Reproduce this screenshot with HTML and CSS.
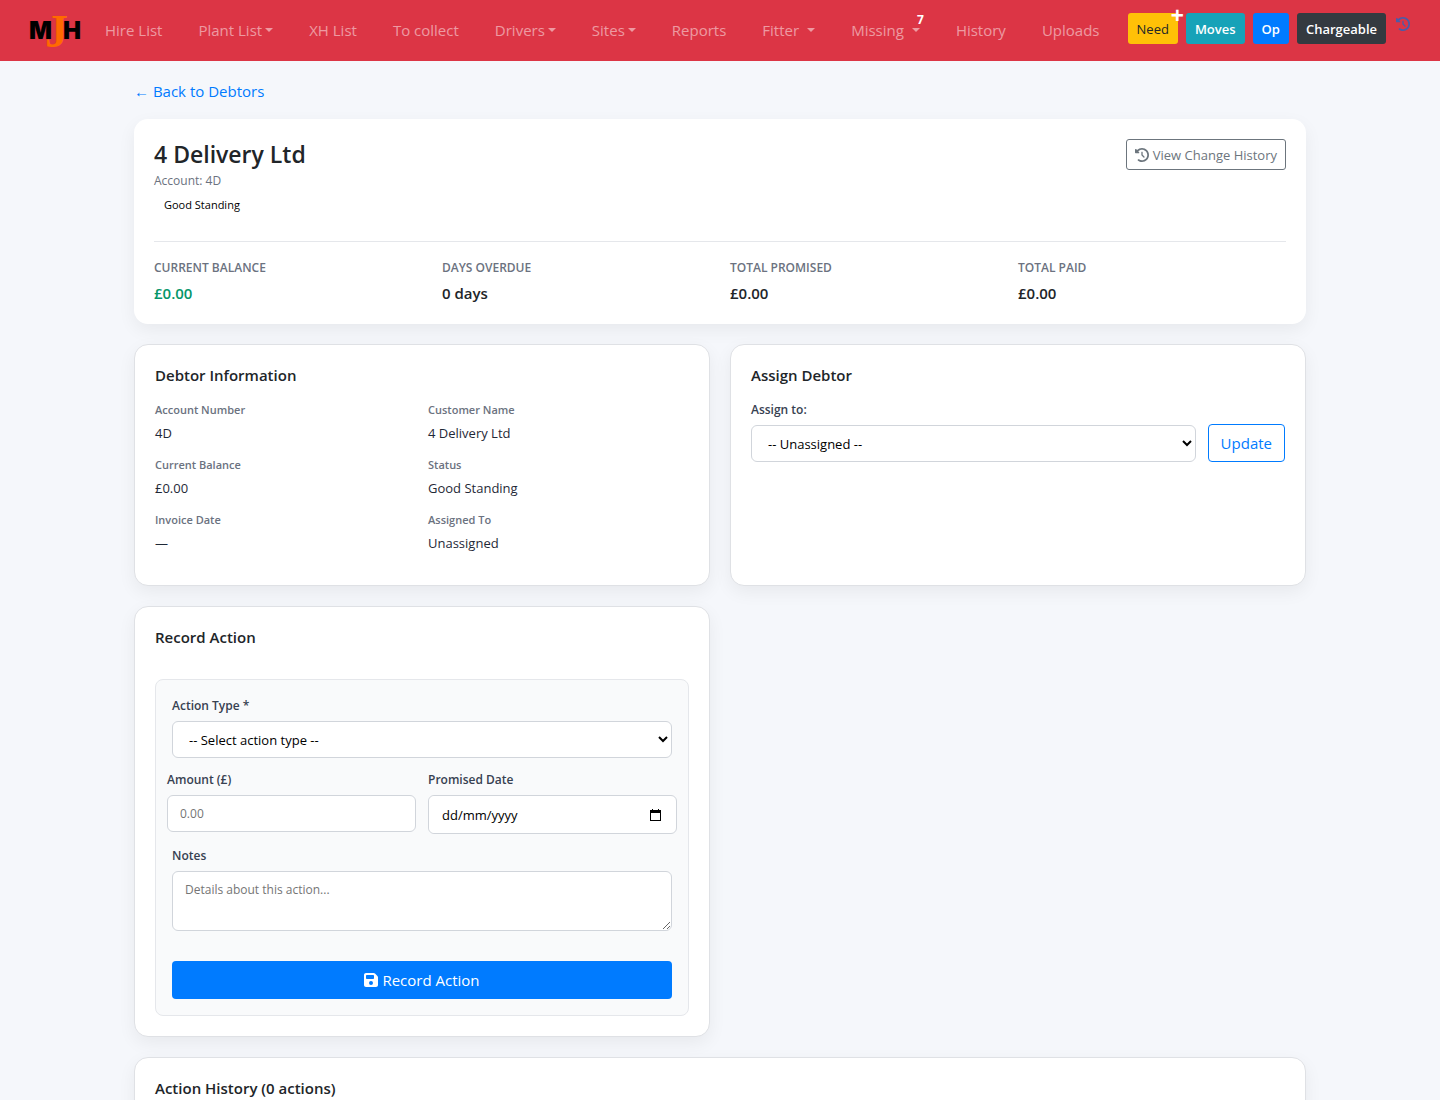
FILE: index.html
```
<!DOCTYPE html>
<html lang="en-GB">
<head>
  <meta charset="utf-8">
  <meta name="viewport" content="width=device-width, initial-scale=1">
  <title>4 Delivery Ltd</title>
  <link rel="stylesheet" href="styles.css">
</head>
<body>
  <nav class="navbar">
    <a href="#" class="brand" aria-label="MJH">
      <svg width="52" height="60" viewBox="0 0 52 60">
        <text x="-1" y="38" class="logo-dark">M</text>
        <text x="33" y="38" class="logo-dark">H</text>
        <text x="15" y="46" class="logo-j">J</text>
      </svg>
    </a>
    <ul class="nav-list">
      <li><a href="#">Hire List</a></li>
      <li><a href="#" class="dropdown">Plant List</a></li>
      <li><a href="#">XH List</a></li>
      <li><a href="#">To collect</a></li>
      <li><a href="#" class="dropdown">Drivers</a></li>
      <li><a href="#" class="dropdown">Sites</a></li>
      <li><a href="#">Reports</a></li>
      <li><a href="#" class="dropdown spaced">Fitter</a></li>
      <li><a href="#" class="dropdown spaced">Missing<span class="count">7</span></a></li>
      <li><a href="#">History</a></li>
      <li><a href="#">Uploads</a></li>
    </ul>
    <div class="nav-buttons">
      <button type="button" class="btn btn-sm btn-warning">Need<span class="plus">+</span></button>
      <button type="button" class="btn btn-sm btn-info">Moves</button>
      <button type="button" class="btn btn-sm btn-primary">Op</button>
      <button type="button" class="btn btn-sm btn-dark">Chargeable</button>
    </div>
    <a href="#" class="nav-history" aria-label="Change history">
      <svg width="14" height="14" viewBox="0 0 512 512" fill="currentColor"><path d="M75 75L41 41C25.900 25.900 0 36.600 0 57.900V168c0 13.300 10.700 24 24 24H134.100c21.400 0 32.100-25.900 17-41l-30.800-30.800C155 85.500 203 64 256 64c106 0 192 86 192 192s-86 192-192 192c-40.800 0-78.600-12.700-109.700-34.400c-14.500-10.100-34.400-6.600-44.600 7.900s-6.600 34.400 7.900 44.600C151.200 495 201.700 512 256 512c141.400 0 256-114.600 256-256S397.400 0 256 0C185.300 0 121.300 28.700 75 75zm181 53c-13.300 0-24 10.700-24 24V256c0 6.400 2.500 12.500 7 17l72 72c9.400 9.400 24.600 9.400 33.900 0s9.400-24.600 0-33.900l-65-65V152c0-13.300-10.700-24-24-24z"/></svg>
    </a>
  </nav>

  <main class="container">
    <a href="#" class="back-link">← Back to Debtors</a>

    <section class="summary">
      <div class="summary-top">
        <div>
          <h1>4 Delivery Ltd</h1>
          <p class="account">Account: 4D</p>
          <span class="badge">Good Standing</span>
        </div>
        <a href="#" class="btn btn-sm btn-outline-secondary">
          <svg width="14" height="14" viewBox="0 0 512 512" fill="currentColor"><path d="M75 75L41 41C25.900 25.900 0 36.600 0 57.900V168c0 13.300 10.700 24 24 24H134.100c21.400 0 32.100-25.900 17-41l-30.800-30.800C155 85.500 203 64 256 64c106 0 192 86 192 192s-86 192-192 192c-40.800 0-78.600-12.700-109.700-34.400c-14.500-10.100-34.400-6.600-44.600 7.900s-6.600 34.400 7.900 44.600C151.200 495 201.700 512 256 512c141.400 0 256-114.600 256-256S397.400 0 256 0C185.300 0 121.300 28.700 75 75zm181 53c-13.300 0-24 10.700-24 24V256c0 6.400 2.500 12.500 7 17l72 72c9.400 9.400 24.600 9.400 33.900 0s9.400-24.600 0-33.900l-65-65V152c0-13.300-10.700-24-24-24z"/></svg>
          View Change History
        </a>
      </div>
      <div class="stats">
        <div>
          <div class="stat-label">Current Balance</div>
          <div class="stat-value green">£0.00</div>
        </div>
        <div>
          <div class="stat-label">Days Overdue</div>
          <div class="stat-value">0 days</div>
        </div>
        <div>
          <div class="stat-label">Total Promised</div>
          <div class="stat-value">£0.00</div>
        </div>
        <div>
          <div class="stat-label">Total Paid</div>
          <div class="stat-value">£0.00</div>
        </div>
      </div>
    </section>

    <div class="grid">
      <section class="card">
        <h2>Debtor Information</h2>
        <dl class="info">
          <div><dt>Account Number</dt><dd>4D</dd></div>
          <div><dt>Customer Name</dt><dd>4 Delivery Ltd</dd></div>
          <div><dt>Current Balance</dt><dd>£0.00</dd></div>
          <div><dt>Status</dt><dd>Good Standing</dd></div>
          <div><dt>Invoice Date</dt><dd>—</dd></div>
          <div><dt>Assigned To</dt><dd>Unassigned</dd></div>
        </dl>
      </section>

      <section class="card">
        <h2>Assign Debtor</h2>
        <form class="assign">
          <div class="assign-field">
            <label for="assignTo">Assign to:</label>
            <select id="assignTo" name="assignTo">
              <option>-- Unassigned --</option>
            </select>
          </div>
          <button type="submit" class="btn btn-outline-primary">Update</button>
        </form>
      </section>

      <section class="card">
        <h2>Record Action</h2>
        <form class="action-form">
          <div class="field">
            <label for="actionType">Action Type *</label>
            <select id="actionType" name="actionType">
              <option>-- Select action type --</option>
            </select>
          </div>
          <div class="form-row">
            <div>
              <label for="amount">Amount (£)</label>
              <input type="text" id="amount" name="amount" placeholder="0.00">
            </div>
            <div>
              <label for="promisedDate">Promised Date</label>
              <div class="date-field">
                <input type="text" id="promisedDate" name="promisedDate" placeholder="dd/mm/yyyy">
                <button type="button" class="date-button" aria-label="Open calendar">
                  <svg width="11" height="12" viewBox="0 0 11 12"><path d="M2 0h1v1h5V0h1v1h2v11H0V1h2zM1 4v7h9V4z" fill="#000" fill-rule="evenodd"/></svg>
                </button>
              </div>
            </div>
          </div>
          <div class="field">
            <label for="notes">Notes</label>
            <textarea id="notes" name="notes" placeholder="Details about this action..."></textarea>
          </div>
          <button type="submit" class="btn btn-primary btn-block">
            <svg width="14" height="16" viewBox="0 0 448 512" fill="currentColor"><path d="M64 32C28.700 32 0 60.700 0 96V416c0 35.300 28.700 64 64 64H384c35.300 0 64-28.700 64-64V173.300c0-17-6.700-33.300-18.700-45.300L352 50.700C340 38.700 323.700 32 306.700 32H64zm0 96c0-17.700 14.300-32 32-32H288c17.700 0 32 14.300 32 32v64c0 17.700-14.300 32-32 32H96c-17.700 0-32-14.300-32-32V128zM224 288a64 64 0 1 1 0 128 64 64 0 1 1 0-128z"/></svg>
            Record Action
          </button>
        </form>
      </section>

      <section class="card wide">
        <h2>Action History (0 actions)</h2>
      </section>
    </div>
  </main>
</body>
</html>
```
FILE: styles.css
```
* {
  box-sizing: border-box;
}

body {
  margin: 0;
  background: #f5f7fb;
  color: #212529;
  font-family: "Open Sans", "Noto Sans", sans-serif;
  font-size: 15px;
  line-height: 24px;
}

a {
  color: #007bff;
  text-decoration: none;
}

h1, h2, p, ul, dl, dd {
  margin: 0;
  padding: 0;
}

/* navbar */
.navbar {
  display: flex;
  align-items: center;
  min-height: 61px;
  padding: 0 30px;
  background: #dc3545;
}

.brand {
  display: flex;
  margin-right: 23px;
}

.brand svg {
  overflow: visible;
}

.logo-dark {
  font: 900 24px Inter, sans-serif;
  fill: #000;
}

.logo-j {
  font: bold 46px "Liberation Serif", serif;
  fill: #ff6a00;
}

.nav-list {
  display: flex;
  flex: 1;
  justify-content: space-between;
  margin-bottom: 2px;
  list-style: none;
}

.nav-list a {
  position: relative;
  color: rgba(255, 255, 255, 0.5);
  white-space: nowrap;
}

.dropdown::after {
  content: "";
  display: inline-block;
  margin-left: 3px;
  vertical-align: 4px;
  border-top: 4px solid;
  border-left: 4px solid transparent;
  border-right: 4px solid transparent;
}

.dropdown.spaced::after {
  margin-left: 8px;
}

.count {
  position: absolute;
  top: -6px;
  right: -4px;
  color: #fff;
  font-size: 12px;
  font-weight: 700;
  line-height: 12px;
}

.nav-buttons {
  display: flex;
  gap: 8px;
  margin-left: 28px;
  margin-bottom: 4px;
}

.nav-history {
  display: flex;
  margin: 0 0 13px 10px;
  color: #4a5ca8;
}

/* buttons */
.btn {
  position: relative;
  display: inline-flex;
  align-items: center;
  justify-content: center;
  gap: 4px;
  height: 38px;
  padding: 0 12px;
  border: 1px solid transparent;
  border-radius: 4px;
  background: transparent;
  font-family: inherit;
  font-size: 15px;
  white-space: nowrap;
}

.btn-sm {
  height: 31px;
  padding: 0 8px;
  border-radius: 3px;
  font-size: 13px;
}

.nav-buttons .btn {
  font-weight: 600;
}

.nav-buttons .btn-warning {
  background: #ffc107;
  color: #212529;
  font-weight: 400;
}

.btn-info {
  background: #17a2b8;
  color: #fff;
}

.btn-primary {
  background: #007bff;
  color: #fff;
}

.btn-dark {
  background: #343a40;
  color: #fff;
}

.btn-outline-primary {
  border-color: #007bff;
  color: #007bff;
}

.btn-outline-secondary {
  border-color: #6c757d;
  color: #6c757d;
}

.btn-block {
  width: 100%;
  margin-top: 18px;
}

.plus {
  position: absolute;
  top: -9px;
  right: -7px;
  font-size: 23px;
  font-weight: 700;
  line-height: 20px;
  color: #fff;
}

/* page */
.container {
  max-width: 1200px;
  margin: 0 auto;
  padding: 18px 14px;
}

.back-link {
  display: inline-block;
  margin-bottom: 16px;
}

.summary,
.card {
  padding: 20px;
  border-radius: 14px;
  background: #fff;
  box-shadow: 0 6px 18px rgba(0, 0, 0, 0.06);
}

.summary {
  margin-bottom: 20px;
}

.summary-top {
  display: flex;
  justify-content: space-between;
  align-items: flex-start;
  margin-bottom: 16px;
  padding-bottom: 27px;
  border-bottom: 1px solid #e5e7eb;
}

h1 {
  font-size: 23px;
  font-weight: 600;
  line-height: 31px;
}

.account {
  color: #6b7280;
  font-size: 12px;
  line-height: 22px;
}

.badge {
  display: block;
  margin-top: 3px;
  padding: 0 10px;
  color: #000;
  font-size: 11px;
  font-weight: 500;
  line-height: 19px;
}

.stats {
  display: grid;
  grid-template-columns: repeat(4, 1fr);
  gap: 20px;
}

.stat-label {
  margin-bottom: 4px;
  color: #6b7280;
  font-size: 12px;
  font-weight: 600;
  line-height: 20px;
  text-transform: uppercase;
}

.stat-value {
  font-size: 15px;
  font-weight: 600;
  line-height: 22px;
}

.green {
  color: #059669;
}

.grid {
  display: grid;
  grid-template-columns: 1fr 1fr;
  gap: 20px;
}

.card {
  border: 1px solid #dfe1e5;
}

.wide {
  grid-column: span 2;
}

h2 {
  margin-bottom: 15px;
  font-size: 15px;
  font-weight: 600;
  line-height: 20px;
}

.info {
  display: grid;
  grid-template-columns: 1fr 1fr;
  gap: 0 12px;
}

.info div {
  margin-bottom: 12px;
}

.info dt {
  margin-bottom: 4px;
  color: #6b7280;
  font-size: 11px;
  font-weight: 600;
  line-height: 19px;
}

.info dd {
  color: #1f2937;
  font-size: 13px;
  line-height: 20px;
}

/* forms */
label {
  display: block;
  margin-bottom: 6px;
  color: #374151;
  font-size: 12px;
  font-weight: 600;
  line-height: 19px;
}

input,
select,
textarea {
  display: block;
  width: 100%;
  height: 37px;
  padding: 8px 12px;
  border: 1px solid #d1d5db;
  border-radius: 6px;
  background: #fff;
  color: #000;
  font-family: inherit;
  font-size: 12px;
}

select {
  padding: 0 0 0 12px;
  font-size: 13px;
}

textarea {
  height: 60px;
  line-height: 20px;
  resize: vertical;
}

.date-field {
  display: flex;
  align-items: center;
  border: 1px solid #d1d5db;
  border-radius: 6px;
  background: #fff;
}

.date-field input {
  flex: 1;
  min-width: 0;
  padding: 8px 0 8px 13px;
  border: 0;
  font-size: 13px;
}

.date-field input::placeholder {
  color: #000;
}

.date-button {
  display: flex;
  margin-right: 9px;
  padding: 6px;
  border: 0;
  background: none;
}

.assign {
  display: flex;
  align-items: flex-end;
  gap: 12px;
}

.assign-field {
  flex: 1;
}

.action-form {
  margin-top: 32px;
  padding: 16px;
  border: 1px solid #e5e7eb;
  border-radius: 8px;
  background: #f9fafb;
}

.field {
  margin-bottom: 12px;
}

.form-row {
  display: grid;
  grid-template-columns: 1fr 1fr;
  align-items: start;
  gap: 12px;
  margin: 0 -5px 12px;
}
```
